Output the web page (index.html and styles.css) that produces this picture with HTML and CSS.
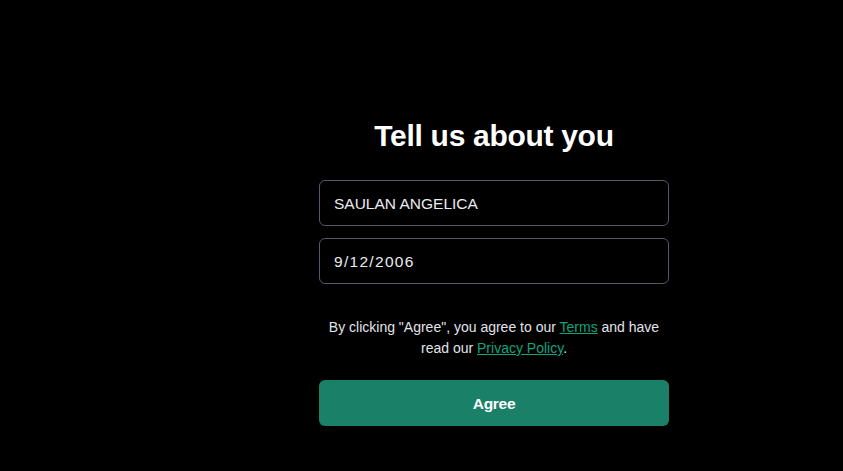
FILE: index.html
```html
<!DOCTYPE html>
<html lang="en">
<head>
<meta charset="utf-8">
<title>Tell us about you</title>
<link rel="stylesheet" href="styles.css">
</head>
<body>
<div class="page">
  <div class="side"></div>
  <main class="main">
    <div class="card">
      <h1 class="title">Tell us about you</h1>
      <div class="field">SAULAN ANGELICA</div>
      <div class="field field-date">9/12/2006</div>
      <p class="terms">By clicking "Agree", you agree to our <a href="#">Terms</a> and have read our <a href="#">Privacy Policy</a>.</p>
      <button class="btn">Agree</button>
    </div>
  </main>
</div>
</body>
</html>
```
FILE: styles.css
```css
html, body {
  margin: 0;
  padding: 0;
  background: #000;
  height: 100%;
}
body {
  font-family: "Liberation Sans", Arial, sans-serif;
  color: #ececf1;
}
.page {
  display: flex;
  height: 471px;
}
.side {
  width: 145px;
  flex: none;
}
.main {
  flex: 1;
  display: flex;
  justify-content: center;
}
.card {
  width: 350px;
  display: flex;
  flex-direction: column;
  padding-top: 116px;
}
.title {
  margin: 0 0 24px;
  font-size: 30px;
  line-height: 40px;
  font-weight: 700;
  text-align: center;
  color: #fff;
  letter-spacing: -0.3px;
}
.field {
  height: 46px;
  box-sizing: border-box;
  border: 1px solid #565869;
  border-radius: 6px;
  padding: 2px 14px 0;
  display: flex;
  align-items: center;
  font-size: 15.5px;
  color: #ececf1;
  margin-bottom: 12px;
}
.field-date {
  letter-spacing: 1.3px;
}
.terms {
  margin: 21px 0 21px;
  font-size: 14px;
  line-height: 21px;
  text-align: center;
  color: #e3e3ea;
  padding: 0 8px;
}
.terms a {
  color: #10a37f;
  text-decoration: underline;
}
.btn {
  height: 46px;
  border: none;
  border-radius: 6px;
  background: #1b8068;
  color: #fff;
  font-family: inherit;
  font-size: 15.5px;
  font-weight: 700;
  letter-spacing: -0.3px;
  padding: 2px 0 0;
}
```
